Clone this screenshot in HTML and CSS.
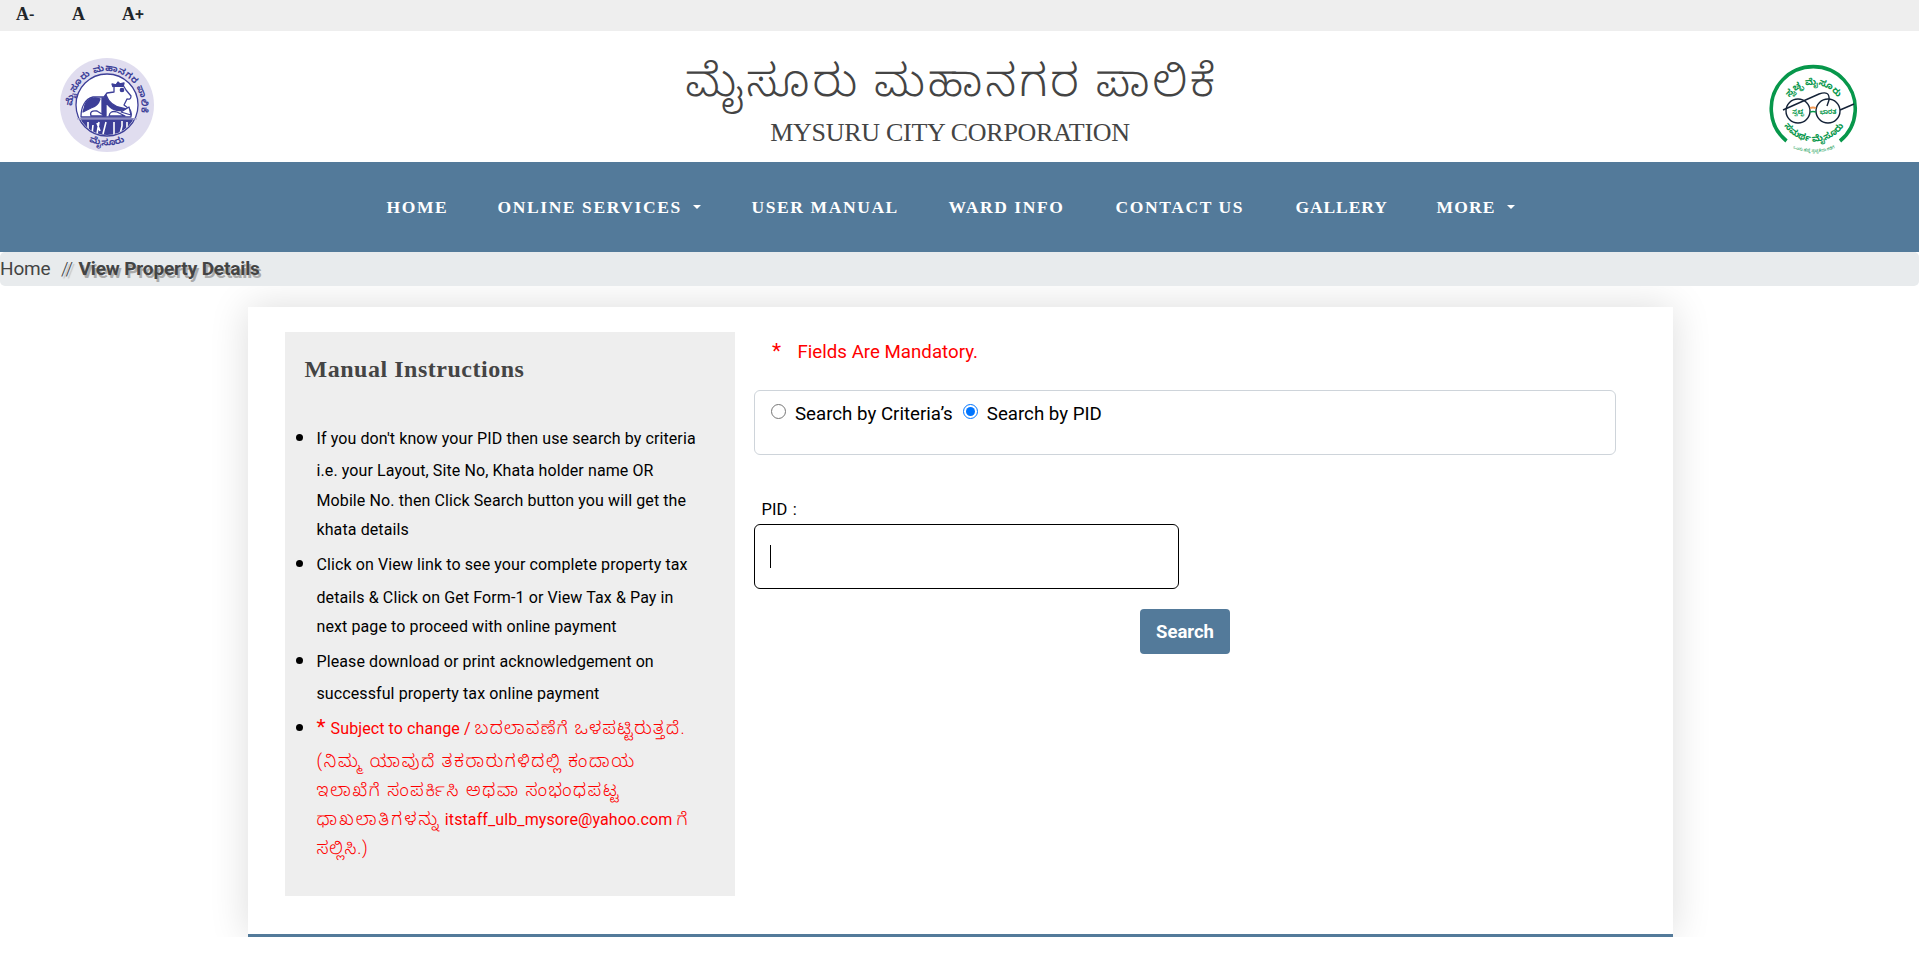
FILE: index.html
```html
<!DOCTYPE html>
<html lang="en">
<head>
<meta charset="utf-8">
<title>Mysuru City Corporation</title>
<link rel="stylesheet" href="styles.css">
</head>
<body>
<div class="topbar"><a class="size-down">A<span>-</span></a><a class="size-base">A</a><a class="size-up">A<span>+</span></a></div>
<header class="header">
  <svg class="seal" viewBox="0 0 94 94">
    <defs>
      <path id="seal-top" d="M12.500 50A34.500 35 0 0 1 81.500 46L81 62"/>
      <path id="seal-bottom" d="M11 66A41 41 0 0 0 83 66"/>
      <clipPath id="seal-clip"><circle cx="47" cy="47" r="30"/></clipPath>
    </defs>
    <circle cx="47" cy="47" r="47" fill="#e0ddef"/>
    <circle cx="47" cy="47" r="31" fill="#fff" stroke="#3d3f98" stroke-width="1.300"/>
    <g clip-path="url(#seal-clip)" fill="#3d3f98">
      <rect x="15" y="60" width="64" height="20"/>
      <path d="M28 64v7M33 67l-1 9M37 65l3 8M46 64l-3 12M54 64v13M62 63v5l-2 8M67 64v6M39 64l-2 12" stroke="#fff" stroke-width="1.600"/>
    </g>
    <path d="M17 60.800h60" stroke="#aaa9d0" stroke-width="1.200"/>
    <g fill="#fff" stroke="#3d3f98" stroke-width="1.300" stroke-linejoin="round">
      <path d="M21 59C21 49 25 41 33 39L44 39L47 35L54 34L54 29L58 25L63 27L66 32L71 38Q71 42 67 41L64 47L68 50Q72 52 71 59Z"/>
      <path d="M24 51Q25 41 35 40L40 41Q38 48 31 50L23 54Z" fill="#3d3f98"/>
      <path d="M42 40l4 0v18h-4zM46 37Q50 48 62 50l4 1q-9 4-16-2t-5-10z" fill="#3d3f98"/>
      <path d="M31 58q-2-6 6-5l8 5zM49 58q1-6 8-4l8 4zM61 54l8-5 2 8z"/>
      <path d="M53 29l-1-3 4 1 2-3 2 2 4-1-1 4" fill="#3d3f98"/>
      <circle cx="62" cy="32" r="1.700" fill="#3d3f98"/>
    </g>
    <text class="seal-text"><textPath href="#seal-top" textLength="116" startOffset="2">ಮೈಸೂರು ಮಹಾನಗರ ಪಾಲಿಕೆ</textPath></text>
    <text class="seal-text"><textPath href="#seal-bottom" startOffset="50%" text-anchor="middle">ಮೈಸೂರು</textPath></text>
  </svg>
  <div class="titles">
    <h1 class="title-kn" lang="kn">ಮೈಸೂರು ಮಹಾನಗರ ಪಾಲಿಕೆ</h1>
    <h2 class="title-en">MYSURU CITY CORPORATION</h2>
  </div>
  <svg class="swachh" viewBox="0 0 90 90">
    <defs>
      <path id="sw-top" d="M18 36A29 29 0 0 1 71 36"/>
      <path id="sw-mid" d="M13 56A36 36 0 0 0 77 56"/>
      <path id="sw-low" d="M9 74A60 60 0 0 0 81 74"/>
    </defs>
    <path d="M17.500 75A42 42 0 1 1 71 75" fill="none" stroke="#07974b" stroke-width="3.600"/>
    <g fill="none" stroke="#142237" stroke-width="1.400">
      <circle cx="29" cy="45" r="12"/><circle cx="59" cy="45" r="12"/>
      <path d="M14 44L50 28Q61 24 60 34l-2 6M71 44l14-6"/>
    </g>
    <path d="M41 42q3-1 6 0" stroke="#f19a55" stroke-width="2" fill="none"/>
    <path d="M41 46q3-1 6 0" stroke="#07974b" stroke-width="1.500" fill="none"/>
    <g class="swachh-text">
      <text><textPath href="#sw-top" startOffset="50%" text-anchor="middle">ಸ್ವಚ್ಛ ಮೈಸೂರು</textPath></text>
      <text><textPath href="#sw-mid" startOffset="50%" text-anchor="middle">ಸಮರ್ಥ ಮೈಸೂರು</textPath></text>
      <text class="tiny" x="29" y="48" text-anchor="middle">ಸ್ವಚ್ಛ</text>
      <text class="tiny" x="59" y="48" text-anchor="middle">ಭಾರತ</text>
      <text class="motto"><textPath href="#sw-low" startOffset="50%" text-anchor="middle">ಒಂದು ಹೆಜ್ಜೆ ಸ್ವಚ್ಛತೆಯ ಕಡೆಗೆ</textPath></text>
    </g>
  </svg>
</header>
<nav class="nav">
  <a class="n1">HOME</a><a class="n2">ONLINE SERVICES<i class="caret"></i></a><a class="n3">USER MANUAL</a><a class="n4">WARD INFO</a><a class="n5">CONTACT US</a><a class="n6">GALLERY</a><a class="n7">MORE<i class="caret"></i></a>
</nav>
<div class="breadcrumb"><a>Home</a><span class="sep">//</span><b>View Property Details</b></div>
<main class="card">
  <section class="manual">
    <h3>Manual Instructions</h3>
    <ul>
      <li>If you don't know your PID then use search by criteria<br>i.e. your Layout, Site No, Khata holder name OR<br>Mobile No. then Click Search button you will get the<br>khata details</li>
      <li>Click on View link to see your complete property tax<br>details &amp; Click on Get Form-1 or View Tax &amp; Pay in<br>next page to proceed with online payment</li>
      <li>Please download or print acknowledgement on<br>successful property tax online payment</li>
      <li class="notice"><span class="star">*</span> Subject to change / <span class="k1">ಬದಲಾವಣೆಗೆ ಒಳಪಟ್ಟಿರುತ್ತದೆ.</span><br><span class="k2">(ನಿಮ್ಮ ಯಾವುದೆ ತಕರಾರುಗಳಿದಲ್ಲಿ ಕಂದಾಯ</span><br><span class="k3">ಇಲಾಖೆಗೆ ಸಂಪರ್ಕಿಸಿ ಅಥವಾ ಸಂಭಂಧಪಟ್ಟ</span><br><span class="k4">ಧಾಖಲಾತಿಗಳನ್ನು</span> itstaff_ulb_mysore@yahoo.com <span class="k5">ಗೆ</span><br><span class="k5">ಸಲ್ಲಿಸಿ.)</span></li>
    </ul>
  </section>
  <form class="search">
    <p class="mandatory"><span class="star">*</span>Fields Are Mandatory.</p>
    <div class="choices">
      <label><input type="radio" name="mode">Search by Criteria’s</label>
      <label><input type="radio" name="mode" checked>Search by PID</label>
    </div>
    <label class="pid-label">PID :</label>
    <div class="pid-input"><span class="cursor"></span></div>
    <button type="button">Search</button>
  </form>
</main>
</body>
</html>
```
FILE: styles.css
```css
* { box-sizing: border-box; }
body { margin: 0; background: #fff; color: #000; font-family: Roboto, "Noto Sans Kannada", sans-serif; overflow: hidden; }
h1, h2, h3, p, ul { margin: 0; padding: 0; font-weight: 400; }

.topbar { height: 31px; background: #eee; display: flex; padding-left: 16px; font: bold 18px/28px "Liberation Serif", serif; color: #212529; }
.topbar span { font-family: Roboto, sans-serif; font-weight: 500; font-size: 16px; }
.size-down { width: 56px; }
.size-base { width: 50px; }

.header { height: 131px; display: flex; justify-content: space-between; padding: 0 60px; }
.seal { width: 94px; height: 94px; margin-top: 27px; }
.seal-text { font: bold 9px "Noto Sans Kannada", sans-serif; fill: #3d3f98; }
.titles { text-align: center; color: #444; padding-top: 18px; margin-left: -23px; }
.title-kn { font-size: 45px; font-weight: 300; line-height: 64px; letter-spacing: 3px; margin-right: -3px; white-space: nowrap; }
.title-en { font: 26px/40px "Liberation Serif", serif; letter-spacing: -0.280px; }
.swachh { width: 90px; height: 94px; margin-top: 33px; overflow: visible; }
.swachh-text { font: bold 9px "Noto Sans Kannada", sans-serif; fill: #07974b; }
.tiny { font-size: 6px; }
.motto { font-size: 4px; font-weight: 400; }

.nav { height: 90px; background: #537a9a; color: #fff; display: flex; align-items: center; padding-left: 386.500px; font: bold 17.500px/24px "Liberation Serif", serif; letter-spacing: 1.600px; white-space: nowrap; }
.n1 { width: 111px; }
.n2 { width: 254px; }
.n3 { width: 197px; }
.n4 { width: 167px; }
.n5 { width: 180px; }
.n6 { width: 141px; letter-spacing: 0.900px; }
.n7 { letter-spacing: 1.200px; }
.caret { display: inline-block; margin-left: 11px; vertical-align: 4px; border: 4.500px solid transparent; border-top-color: #fff; border-bottom: 0; }

.breadcrumb { height: 34px; background: #e8ebed; border-radius: 5px; display: flex; font-size: 19px; line-height: 33px; color: #444; }
.breadcrumb a { width: 61px; letter-spacing: -0.150px; }
.sep { width: 17.500px; font-weight: 300; letter-spacing: -1px; text-shadow: 2px 2px 1px #bbb; }
.breadcrumb b { font-weight: 700; letter-spacing: -0.140px; text-shadow: 2px 3px 0 #aaa; }

.card { width: 1425px; height: 630px; margin: 21px 0 0 248px; padding: 25px 37px 0; display: flex; gap: 19px; border-bottom: 3px solid #537a9a; background: #fff; box-shadow: 0 0 37px rgba(0, 0, 0, 0.140); clip-path: inset(-21px -40px 0 -40px); }
.manual { width: 450px; height: 564px; background: #eee; padding: 19px 20px 0 31.500px; }
.manual h3 { margin-left: -12px; font: bold 24px/36px "Liberation Serif", serif; letter-spacing: 0.520px; color: #444; }
.manual ul { list-style: none; margin-top: 35px; font-size: 16px; line-height: 29.400px; letter-spacing: 0.100px; white-space: nowrap; }
.manual li { position: relative; margin-bottom: 3.600px; }
.manual li::first-line { line-height: 34.400px; }
.manual li::before { content: ""; position: absolute; left: -21px; top: 12px; width: 7px; height: 7px; border-radius: 50%; background: #000; }
.manual .notice { color: red; line-height: 29px; }
.notice span { font-size: 17.500px; font-weight: 350; line-height: 20px; }
.notice .star { font-size: 21px; font-weight: 400; letter-spacing: 1px; }
.notice .k1 { letter-spacing: 1.350px; }
.notice .k2, .notice .k3 { letter-spacing: 1.700px; }
.notice .k4 { letter-spacing: 2.200px; }
.k5 { letter-spacing: 0.700px; }

.search { width: 862px; display: flex; flex-direction: column; }
.mandatory { color: red; font-size: 18.700px; line-height: 40px; height: 38px; padding-left: 18px; }
.mandatory .star { display: inline-block; width: 25.500px; font-size: 21px; line-height: 20px; }
.choices { height: 65px; margin-top: 20px; padding: 8px 16px; display: flex; gap: 10px; border: 1px solid #ced4da; border-radius: 6px; font-size: 18.700px; line-height: 30px; }
.choices label { display: flex; }
.choices input { width: 15px; height: 15px; margin: 5px 9px 0 0; }
.pid-label { margin-top: 41px; padding-left: 7.500px; font-size: 16.500px; line-height: 28px; word-spacing: 1.500px; color: #000; }
.pid-input { width: 425px; height: 65px; border: 1px solid #000; border-radius: 6px; padding: 20px 15px; }
.cursor { display: block; width: 1px; height: 23px; background: #000; }
button { width: 90px; height: 45px; margin: 20px 0 0 386px; border: 0; border-radius: 4px; background: #537a9a; color: #fff; font: bold 18.500px Roboto, sans-serif; padding: 0; }
```
